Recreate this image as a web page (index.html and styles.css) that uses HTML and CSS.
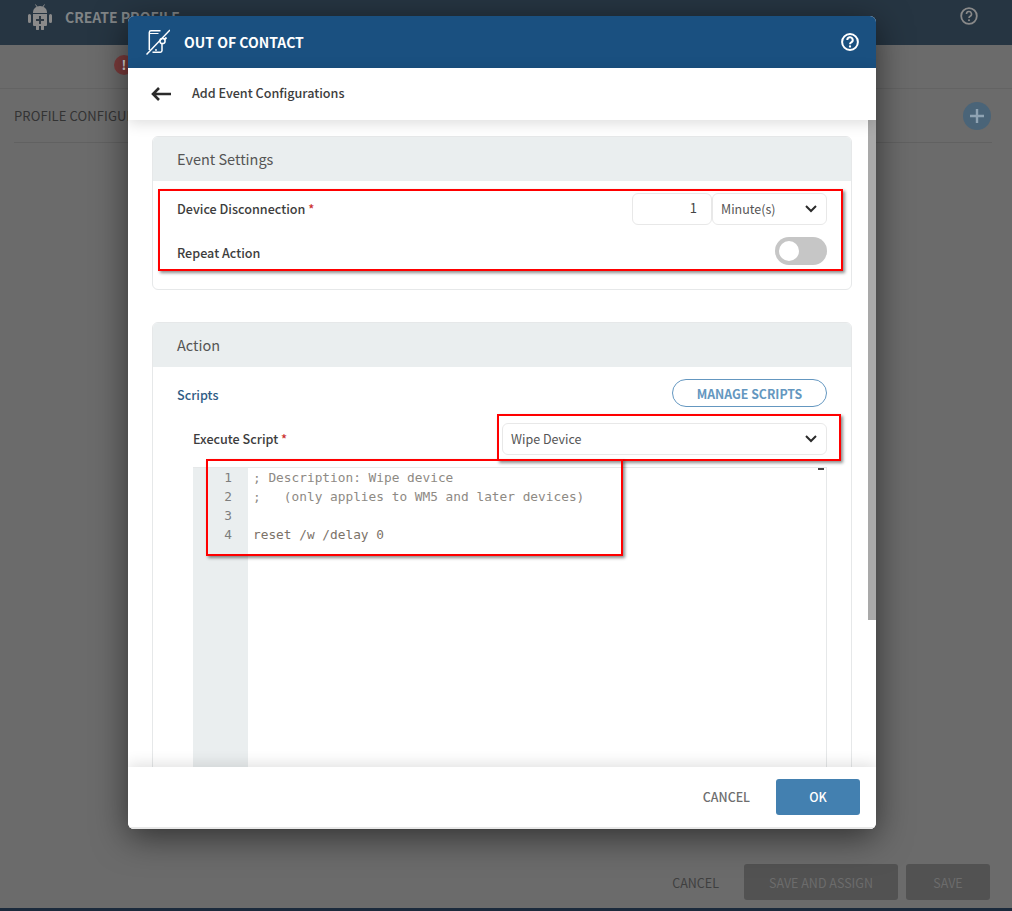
FILE: index.html
```html
<!DOCTYPE html>
<html lang="en">
<head>
<meta charset="utf-8">
<title>Out of Contact</title>
<link rel="stylesheet" href="styles.css">
</head>
<body>
<div class="page">
  <header class="app-head">
    <div class="app-title">
      <svg class="android" viewBox="0 0 24 26" width="24" height="26"><path fill="#8a8a8a" d="M5 8a7 6 0 0 1 14 0v1H5zM5 10h14v11a1 1 0 0 1-1 1h-2v3a1.500 1.500 0 0 1-3 0v-3h-2v3a1.500 1.500 0 0 1-3 0v-3H6a1 1 0 0 1-1-1zM1.500 10A1.500 1.500 0 0 1 3 11.500v6a1.500 1.500 0 0 1-3 0v-6A1.500 1.500 0 0 1 1.500 10zM22.500 10a1.500 1.500 0 0 1 1.500 1.500v6a1.500 1.500 0 0 1-3 0v-6a1.500 1.500 0 0 1 1.500-1.500z"/><path stroke="#8a8a8a" stroke-width="1" d="M7.500 .5l2 3M16.500 .5l-2 3"/><path fill="#2f3a44" d="M11 12h2v3h3v2h-3v3h-2v-3H8v-2h3z"/></svg>
      <span>CREATE PROFILE</span>
    </div>
    <svg class="help-dim" viewBox="0 0 18 18" width="18" height="18"><circle cx="9" cy="9" r="7.800" fill="none" stroke="#8a8a8a" stroke-width="1.800"/><path d="M6.500 7a2.500 2.500 0 1 1 3.700 2.200C9.300 9.700 9 10.200 9 11" fill="none" stroke="#8a8a8a" stroke-width="1.600"/><circle cx="9" cy="13.200" r="1" fill="#8a8a8a"/></svg>
  </header>
  <div class="alert-row"><span class="alert-dot">!</span></div>
  <div class="section-row">
    <span class="section-title">PROFILE CONFIGURATIONS</span>
    <span class="add-btn"><svg viewBox="0 0 14 14" width="14" height="14"><path d="M7 0v14M0 7h14" stroke="#8fa3b3" stroke-width="2.400"/></svg></span>
  </div>
  <div class="page-fill"></div>
  <div class="page-actions">
    <span class="page-cancel">CANCEL</span>
    <span class="page-btn wide">SAVE AND ASSIGN</span>
    <span class="page-btn">SAVE</span>
  </div>
  <div class="page-strip"></div>
</div>

<div class="modal">
  <div class="modal-head">
    <svg class="phone-off" viewBox="0 0 24 26" width="24" height="26" fill="none" stroke="#fff" stroke-width="1.500">
      <path d="M14.500 1.700H5A1.700 1.700 0 0 0 3.300 3.400V21M6.500 23.300H14.300A1.700 1.700 0 0 0 16 21.600V14.500"/>
      <path d="M3.500 4.500H12.500" stroke-width="1"/>
      <path d="M.5 25.500 24 1"/>
      <circle cx="16.500" cy="12" r="2.600"/>
      <path d="M20.500 8.500 18.500 10.500" stroke-width="1.800"/>
      <circle cx="10" cy="21" r=".9" fill="#fff" stroke="none"/>
    </svg>
    <span class="modal-title">OUT OF CONTACT</span>
    <svg class="help" viewBox="0 0 18 18" width="18" height="18"><circle cx="9" cy="9" r="7.900" fill="none" stroke="#fff" stroke-width="2"/><path d="M6.300 7a2.700 2.700 0 1 1 3.900 2.400C9.300 9.900 9 10.300 9 11.200" fill="none" stroke="#fff" stroke-width="2"/><circle cx="9" cy="13.500" r="1.150" fill="#fff"/></svg>
  </div>
  <div class="modal-sub">
    <svg class="back" viewBox="0 0 20 14" width="20" height="14" fill="none" stroke="#2b2b2b" stroke-width="2.600"><path d="M20 7H2M8 1 2 7l6 6"/></svg>
    <span>Add Event Configurations</span>
  </div>
  <div class="modal-scroll">
    <div class="scroll-body">
      <section class="card">
        <h2 class="card-head">Event Settings</h2>
        <div class="card-body settings">
          <div class="row">
            <label class="field-label">Device Disconnection <em>*</em></label>
            <div class="input-group">
              <span class="num-input">1</span>
              <span class="select unit">Minute(s)<svg class="chev" viewBox="0 0 12 8" width="12" height="8" fill="none" stroke="#2b2b2b" stroke-width="2"><path d="M1 1l5 5 5-5"/></svg></span>
            </div>
          </div>
          <div class="row">
            <label class="field-label">Repeat Action</label>
            <span class="toggle"><span class="knob"></span></span>
          </div>
        </div>
      </section>
      <section class="card action">
        <h2 class="card-head">Action</h2>
        <div class="card-body">
          <div class="scripts-row">
            <span class="scripts-link">Scripts</span>
            <span class="manage-btn">MANAGE SCRIPTS</span>
          </div>
          <div class="exec-row">
            <label class="field-label">Execute Script <em>*</em></label>
            <span class="select script-select">Wipe Device<svg class="chev" viewBox="0 0 12 8" width="12" height="8" fill="none" stroke="#2b2b2b" stroke-width="2"><path d="M1 1l5 5 5-5"/></svg></span>
          </div>
          <div class="editor">
            <div class="gutter"><span>1</span><span>2</span><span>3</span><span>4</span></div>
            <pre class="code">; Description: Wipe device
;   (only applies to WM5 and later devices)

<span class="cmd">reset /w /delay 0</span></pre>
            <span class="editor-tick"></span>
          </div>
        </div>
      </section>
    </div>
    <div class="scrollbar"><div class="thumb"></div></div>
  </div>
  <div class="modal-foot">
    <span class="foot-cancel">CANCEL</span>
    <span class="ok-btn">OK</span>
  </div>
</div>

<div class="mark mark-settings"></div>
<div class="mark mark-select"></div>
<div class="mark mark-code"></div>
</body>
</html>
```
FILE: styles.css
```css
* { box-sizing: border-box; }
html, body { margin: 0; height: 911px; overflow: hidden; }
body { font-family: "Noto Sans CJK SC", "Noto Sans", sans-serif; font-size: 13px; color: #444; }

.page { height: 911px; display: flex; flex-direction: column; background: #6b6b6b; }
.app-head { height: 45px; flex: none; background: #263542; display: flex; align-items: flex-start; justify-content: space-between; padding: 4px 34px 0 28px; }
.app-title { display: flex; align-items: center; gap: 13px; font-size: 14px; font-weight: 700; color: #808486; line-height: 20px; height: 26px; }
.help-dim { margin-top: 3px; }
.alert-row { height: 44px; flex: none; border-bottom: 1px solid #636363; padding: 10px 0 0 114px; }
.alert-dot { display: block; width: 20px; height: 20px; border-radius: 50%; background: #7b3b3b; color: #ddd; font-weight: 700; text-align: center; line-height: 20px; }
.section-row { height: 54px; flex: none; margin: 0 20px 0 14px; border-bottom: 1px solid #616161; display: flex; align-items: center; justify-content: space-between; }
.section-title { font-size: 13px; letter-spacing: .1px; color: #333; line-height: 18px; }
.add-btn { width: 28px; height: 28px; border-radius: 50%; background: #4a6478; display: flex; align-items: center; justify-content: center; margin-right: 1px; }
.page-fill { flex: 1; }
.page-actions { flex: none; display: flex; align-items: center; justify-content: flex-end; gap: 8px; padding: 0 22px 8px 0; font-size: 12.500px; }
.page-cancel { color: #3f3f3f; margin-right: 17px; }
.page-btn { width: 84px; height: 36px; border-radius: 3px; background: #525252; color: #6c6c6c; display: flex; align-items: center; justify-content: center; }
.page-btn.wide { width: 154px; }
.page-strip { height: 3px; flex: none; background: #1b2a3c; }

.modal { position: absolute; left: 128px; top: 16px; width: 748px; height: 813px; background: #fff; border-radius: 6px; display: flex; flex-direction: column; overflow: hidden; box-shadow: 0 8px 34px rgba(0,0,0,.55); }
.modal-head { height: 52px; flex: none; background: #1a5080; display: flex; align-items: center; padding: 0 17px 0 18px; color: #fff; }
.phone-off { margin-right: 14px; }
.modal-title { flex: 1; font-size: 14px; font-weight: 700; line-height: 18px; margin-top: -1px; }
.modal-sub { height: 52px; flex: none; display: flex; align-items: center; gap: 21px; padding-left: 23px; font-size: 12.600px; font-weight: 500; color: #3d3d3d; box-shadow: 0 3px 14px rgba(0,0,0,.14); position: relative; z-index: 2; }
.modal-sub span { margin-top: -4px; }
.modal-scroll { flex: 1; min-height: 0; display: flex; overflow: hidden; }
.scroll-body { flex: 1; padding: 16px 16px 0 24px; overflow: hidden; }
.scrollbar { width: 8px; flex: none; background: #fff; }
.thumb { height: 500px; background: #a9a9a9; }

.card { border: 1px solid #e6e8e9; border-radius: 6px; margin-bottom: 32px; overflow: hidden; }
.card-head { margin: 0; height: 44px; background: #eaeeef; padding: 0 24px; font-size: 14.500px; font-weight: 400; line-height: 44px; color: #555; }
.settings { height: 108px; padding: 6px 24px 0; }
.row { height: 44px; display: flex; align-items: center; justify-content: space-between; }
.field-label { font-size: 12.600px; font-weight: 500; color: #3d3d3d; line-height: 18px; }
.field-label em { font-style: normal; color: #c33; }
.input-group { display: flex; }
.num-input { width: 80px; height: 32px; border: 1px solid #e8e8e8; border-radius: 6px; padding-right: 14px; text-align: right; line-height: 28px; color: #444; }
.select { display: flex; align-items: center; justify-content: space-between; height: 32px; border: 1px solid #e8e8e8; border-radius: 6px; padding: 0 9px 0 8px; color: #555; font-size: 12.500px; line-height: 28px; }
.unit { width: 115px; }
.toggle { width: 52px; height: 28px; border-radius: 14px; background: #c6c6c6; padding: 4px; margin-bottom: 4px; }
.knob { display: block; width: 20px; height: 20px; border-radius: 50%; background: #fff; }
.action { height: 560px; margin-bottom: 0; }
.action .card-body { padding: 12px 24px 0; }
.scripts-row { display: flex; align-items: center; justify-content: space-between; height: 28px; }
.scripts-link { color: #2f5c85; font-size: 12.600px; font-weight: 500; line-height: 18px; margin-top: 4px; }
.manage-btn { width: 155px; height: 28px; border: 1px solid #6497c0; border-radius: 14px; color: #6497c0; font-weight: 700; font-size: 12.300px; text-align: center; line-height: 28px; }
.exec-row { display: flex; align-items: center; justify-content: space-between; padding-left: 16px; margin-top: 16px; height: 32px; }
.script-select { width: 325px; }
.editor { display: flex; position: relative; margin: 12px 0 0 16px; height: 320px; border: 1px solid #e6e8e9; border-left: 0; }
.gutter { width: 55px; flex: none; background: #eaeeef; display: flex; flex-direction: column; align-items: flex-end; padding: 0 16px 0 0; font: 12.800px/19px "DejaVu Sans Mono", monospace; color: #7d7d7d; }
.code { margin: 0; padding: 0 0 0 5px; font: 12.800px/19px "DejaVu Sans Mono", monospace; color: #8e8a84; }
.cmd { color: #7c7268; }
.editor-tick { position: absolute; right: 2px; top: 0; width: 6px; height: 2px; background: #444; }

.modal-foot { height: 62px; flex: none; display: flex; align-items: center; justify-content: flex-end; padding: 0 16px 0 0; gap: 26px; box-shadow: 0 -3px 14px rgba(0,0,0,.12); position: relative; z-index: 2; background: #fff; border-bottom: 2px solid #e8e8e8; font-size: 12.400px; }
.foot-cancel { color: #6e6e6e; font-weight: 500; }
.ok-btn { width: 84px; height: 36px; border-radius: 3px; background: #4380b0; color: #fff; text-align: center; line-height: 36px; font-weight: 500; }
.chev { flex: none; }

.mark { position: absolute; border: 2px solid #f00; box-shadow: 2px 2px 3px rgba(0,0,0,.45); pointer-events: none; }
.mark-settings { left: 158px; top: 189px; width: 685px; height: 82px; }
.mark-select { left: 497px; top: 414px; width: 344px; height: 47px; }
.mark-code { left: 206px; top: 459px; width: 417px; height: 97px; }
```
